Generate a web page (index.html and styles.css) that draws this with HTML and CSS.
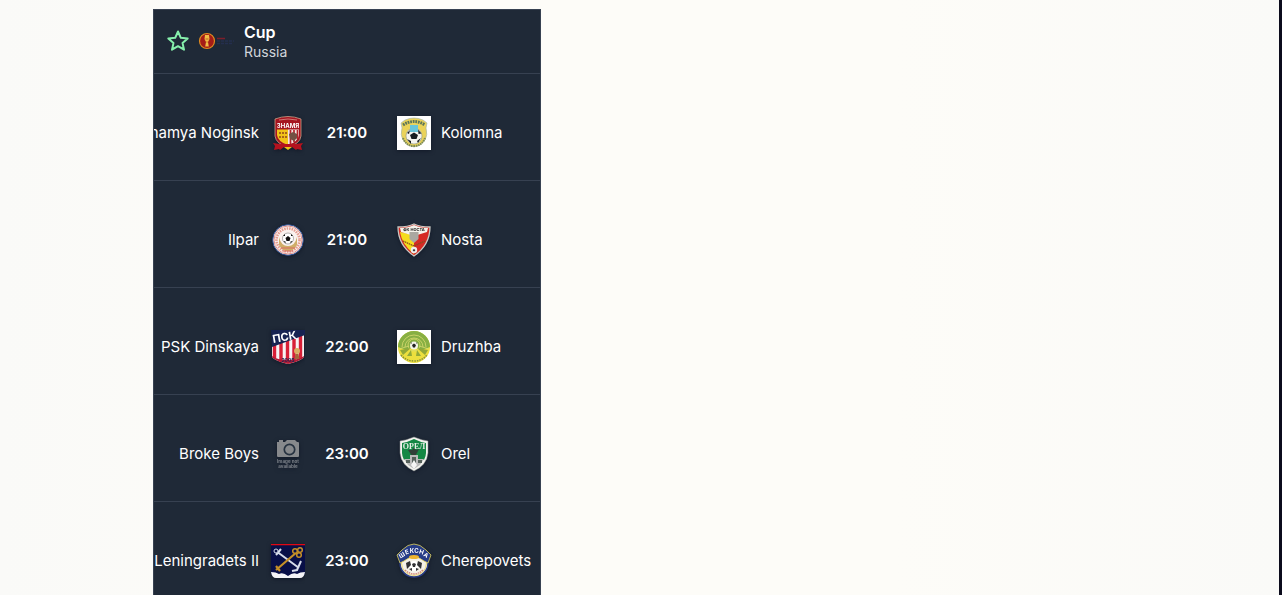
FILE: index.html
```html
<!DOCTYPE html>
<html lang="en">
<head>
<meta charset="utf-8">
<meta name="viewport" content="width=device-width, initial-scale=1">
<title>Cup – Russia</title>
<link rel="stylesheet" href="styles.css">
</head>
<body>
<main class="page">
<section class="card">
  <header class="league">
    <button class="star" type="button" aria-label="Add to favourites">
      <svg viewBox="0 0 24 24" width="24" height="24"><path d="M12 1.500l2.800 6.300 6.900.6-5.200 4.500 1.500 6.800-6-3.500-6 3.500 1.500-6.800-5.200-4.500 6.900-.6z"/></svg>
    </button>
    <svg class="league-logo" viewBox="0 0 36 36" width="36" height="36" aria-hidden="true">
      <circle cx="9" cy="17" r="7.500" fill="#a51c17" stroke="#df8b20" stroke-width="1.200"/>
      <path d="M7 11h4l.5 4-1.500 3 .8 4.500H7.200L8 18l-1.500-3z" fill="#f2bd45"/>
      <path d="M7.500 15h3M8.300 18h1.400" stroke="#b84c16" stroke-width=".8"/>
      <path d="M19 14.500h8" stroke="#7c1f2b" stroke-width="1.500"/>
      <path d="M19 17h17M19 19.500h15" stroke="#242f4e" stroke-width="1.500" stroke-dasharray="3 1"/>
    </svg>
    <div class="titles">
      <h1 class="name">Cup</h1>
      <p class="country">Russia</p>
    </div>
  </header>
  <ul class="matches">
    <li class="match">
      <div class="team home"><span>Znamya Noginsk</span>
        <svg class="crest" viewBox="0 0 34 34" aria-hidden="true">
          <path d="M4 3Q17-2 30 3v17q-1 8-13 11Q5 28 4 20z" fill="#a51420" stroke="#c9a58c" stroke-width=".8"/>
          <path d="M6 13.500h11V29Q7 26 6 19z" fill="#f2c318"/>
          <path d="M17 13.500h11V19q-1 7-11 10z" fill="#f3e4df"/>
          <path d="M19.500 14v14M23 14v12M26.500 14v9" stroke="#b8222b" stroke-width="1.700"/>
          <path d="M8 17h8M8 21h8" stroke="#a8641a" stroke-width="2" stroke-dasharray="2 1"/>
          <path d="M18 18l4-2 4 2v4l-3 3-4-2z" fill="#735043"/>
          <path d="M8 4q9-2 18 0" stroke="#e0a59a" stroke-width=".7" fill="none"/>
          <text x="17" y="11.500" class="mark" font-size="6" fill="#fff">ЗНАМЯ</text>
          <path d="M2 27l7 1h16l7-1-2 3 1 4-5-1-1 1-4-3h-8l-4 3-1-1-5 1 1-4z" fill="#b5121e"/>
          <path d="M13 31h8l-4 3z" fill="#f2c318"/>
        </svg>
      </div>
      <time class="time">21:00</time>
      <div class="team away">
        <svg class="crest" viewBox="0 0 34 34" aria-hidden="true">
          <path d="M0 0h34v34H0z" fill="#fff"/>
          <path d="M4 7l4-3q9-4 18 0l4 3-1 5q2 7-1 12-11 14-22 0-3-5-1-12z" fill="#ead35a" stroke="#9baeb0" stroke-width=".6"/>
          <path d="M6 9q11-7 22 0" fill="none" stroke="#5c7559" stroke-width="3" stroke-dasharray="1.800 .8"/>
          <path d="M6 22q3 8 11 8t11-8" fill="none" stroke="#7d8a52" stroke-width="2" stroke-dasharray="1.500 .8"/>
          <circle cx="17" cy="20" r="8" fill="#f5f5ef" stroke="#79827a" stroke-width=".5"/>
          <path d="M13 9h8v7h-8z" fill="#68c5d9"/>
          <path d="M17 16.500l4 2.500-1.500 4h-5L13 19zM10 17l3-3-1 4zM21 13.500l3.500 4-3 .5zM10 23l4 2v3zM24 22l-4 3 1 2z" fill="#171d20"/>
        </svg>
        <span>Kolomna</span></div>
    </li>
    <li class="match">
      <div class="team home"><span>Ilpar</span>
        <svg class="crest" viewBox="0 0 34 34" aria-hidden="true">
          <circle cx="17" cy="17" r="15.300" fill="#faf2ef" stroke="#294d91" stroke-width="1"/>
          <circle cx="17" cy="17" r="14" fill="none" stroke="#d66a62" stroke-width=".7"/>
          <circle cx="17" cy="17" r="11.500" fill="none" stroke="#e59b8f" stroke-width="2.600" stroke-dasharray="1.500 1"/>
          <path d="M8 14q2 9 9 9t9-9v8q-3 6-9 6t-9-6z" fill="#cfae68"/>
          <path d="M10 25h14M12 28h10" stroke="#d96a60" stroke-width="1.200"/>
          <circle cx="17" cy="15.500" r="5.500" fill="#fff" stroke="#666" stroke-width=".5"/>
          <path d="M17 13l2.500 2-1 3h-3l-1-3zM12 13l2-2v2zM20 11l2 2h-2zM12.500 18l2 .5v2zM21.500 18l-2 .5v2z" fill="#111"/>
        </svg>
      </div>
      <time class="time">21:00</time>
      <div class="team away">
        <svg class="crest" viewBox="0 0 34 34" aria-hidden="true">
          <path d="M1 4Q11 4 17 1q6 3 16 3 0 18-16 29Q1 22 1 4z" fill="#d62a24" stroke="#c8c8c3" stroke-width="1.300"/>
          <path d="M3 9l14 3v19Q5 22 3 9z" fill="#f5dc1f"/>
          <path d="M3 5q8 0 14-3 6 3 14 3l-1 4-13 4L4 9z" fill="#f5f3eb"/>
          <text x="17" y="7.500" class="mark" font-size="4" fill="#222">ФК НОСТА</text>
          <path d="M12.500 9h9v7l-4.500 4-4.500-4z" fill="#aaa8a1"/>
          <path d="M6 18l11 5 11-5" stroke="#8a4a1e" stroke-width="1.300" stroke-dasharray="1.500 .6" fill="none"/>
          <circle cx="17" cy="27" r="3.200" fill="#eee"/><path d="M17 26l1.300 1-.6 1.300h-1.400l-.6-1.300z" fill="#333"/>
        </svg>
        <span>Nosta</span></div>
    </li>
    <li class="match">
      <div class="team home"><span>PSK Dinskaya</span>
        <svg class="crest" viewBox="0 0 34 34" aria-hidden="true">
          <path d="M1 0h32v26q0 4-16 8Q1 30 1 26z" fill="#f7f3f4"/>
          <path d="M3.500 15v13M10 12v20M16.500 10v23M23 7v25M29.500 5v24" stroke="#d81f37" stroke-width="3.400"/>
          <path d="M0 0h34v5L1 17z" fill="#172352"/>
          <text x="14" y="11" class="mark" font-size="11" transform="rotate(-10 13 10)" fill="#fff">ПСК</text>
          <path d="M1 26q0 4 16 8 16-4 16-8-5 4-16 4T1 26z" fill="#b21c37"/>
          <text x="17" y="32" class="mark" font-size="5" fill="#172352">2005</text>
          <circle cx="26" cy="21" r="3" fill="#d8ad62"/><path d="M24.500 24h3l1 5h-5z" fill="#a6663b"/>
        </svg>
      </div>
      <time class="time">22:00</time>
      <div class="team away">
        <svg class="crest" viewBox="0 0 34 34" aria-hidden="true">
          <path d="M0 0h34v34H0z" fill="#fff"/>
          <circle cx="17" cy="17" r="16" fill="#ecdf3e"/>
          <path d="M1 17a16 16 0 0132 0l-8 3-8-3-8 3z" fill="#87af43"/>
          <g fill="none" stroke="#d9db70" stroke-width=".8"><circle cx="17" cy="15" r="6"/><path d="M8 17a9 9 0 0118 0M5 17a12 12 0 0124 0M2 19l10-3M5 23l9-5M10 26l5-6M32 19l-10-3M29 23l-9-5M24 26l-5-6"/></g>
          <path d="M3 20l11-2-8 7zM31 20l-11-2 8 7zM14 20l-4 6h5zM20 20l4 6h-5z" fill="#91a838"/>
          <circle cx="17" cy="15.500" r="4" fill="#f5f5e9"/><path d="M17 13.500l2 1.500-1 2.500h-2L15 15zM13.500 13l1-1v2zM19.500 12l1 1-1 1z" fill="#222"/>
          <path d="M4 25q5 6 13 6t13-6" fill="none" stroke="#89903c" stroke-width="1.500" stroke-dasharray="1.500 1"/>
        </svg>
        <span>Druzhba</span></div>
    </li>
    <li class="match">
      <div class="team home"><span>Broke Boys</span>
        <svg class="crest" viewBox="0 0 34 34" aria-hidden="true">
          <path d="M6 5h2V3h4v2h2l2-2h8l2 2h1q1 0 1 1v13q0 1-1 1H7q-1 0-1-1z" fill="#87898c"/>
          <circle cx="18.500" cy="12.500" r="5.200" fill="#87898c" stroke="#263240" stroke-width="1.700"/>
          <text x="17" y="26" class="note" font-size="4.500" fill="#7b8088">Image not</text>
          <text x="17" y="31" class="note" font-size="4.500" fill="#7b8088">available</text>
        </svg>
      </div>
      <time class="time">23:00</time>
      <div class="team away">
        <svg class="crest" viewBox="0 0 34 34" aria-hidden="true">
          <path d="M3 4Q10 3 17 0q7 3 14 4v12q-1 12-14 18Q4 28 3 16z" fill="#f4f4ef" stroke="#888f8c" stroke-width=".5"/>
          <path d="M5 6q6-1 12-4 6 3 12 4v10q0 3-2 7l-10-1-10 1q-2-4-2-7z" fill="#148744"/>
          <text x="17" y="11.500" class="serif-mark" font-size="8" fill="#e7eee5">ОРЕЛ</text>
          <path d="M15 13l2-2 2 2 3-1-2 4-3 5-4-5-2-3z" fill="#303f38"/>
          <path d="M7 22h6v-4h8v4h6l-4 6-6 4-6-4z" fill="#bbb"/>
          <path d="M9 23h4v3H9zM15 20h4v6h-4zM21 23h4v3h-4z" fill="#55615b"/>
          <path d="M17 23l3 5-3 4-3-4z" fill="#f5f5f5"/>
        </svg>
        <span>Orel</span></div>
    </li>
    <li class="match">
      <div class="team home"><span>Leningradets II</span>
        <svg class="crest" viewBox="0 0 34 34" aria-hidden="true">
          <path d="M0 0h34v30q-2 3-5 2l-6 1-6 1-6-1-6-1q-3 1-5-2z" fill="#080f47"/>
          <path d="M0 0h34v1.300H0z" fill="#e10813"/>
          <path d="M5 7l23 17M5 11l5-6M21 27l5-1 4-9" fill="none" stroke="#d6dce9" stroke-width="2"/>
          <circle cx="5" cy="7" r="2" fill="#080f47" stroke="#d6dce9"/>
          <path d="M5 26L26 8M5 22l4 5" fill="none" stroke="#c48f28" stroke-width="2.200"/>
          <g fill="#080f47" stroke="#c48f28" stroke-width="1.500"><circle cx="24" cy="7" r="2.300"/><circle cx="29" cy="6" r="2.300"/><circle cx="28" cy="11" r="2.300"/></g>
          <path d="M0 28q5 0 8 2 4-2 9 2 5-4 9-2 3-2 8-2-1 6-5 6H5q-4 0-5-6z" fill="#f4f4f7"/>
        </svg>
      </div>
      <time class="time">23:00</time>
      <div class="team away">
        <svg class="crest" viewBox="0 0 34 34" aria-hidden="true">
          <circle cx="17" cy="19" r="14" fill="#f4f1e8" stroke="#293c82" stroke-width="1.500"/>
          <circle cx="17" cy="19" r="12.500" fill="none" stroke="#e0c846" stroke-width=".7"/>
          <path d="M0 11l5-5q12-12 24 0l5 5-3 8-4-2q-10-8-20 0l-4 2z" fill="#263c87" stroke="#e4d65b" stroke-width=".8"/>
          <g class="mark" font-size="6" fill="#fff"><text x="6" y="13" transform="rotate(-32 6 13)">Ш</text><text x="10.500" y="10" transform="rotate(-18 10.500 10)">Е</text><text x="15" y="8.500">К</text><text x="19.500" y="8.500">С</text><text x="24" y="10" transform="rotate(18 24 10)">Н</text><text x="28" y="13" transform="rotate(32 28 13)">А</text></g>
          <ellipse cx="17" cy="13" rx="5" ry="2" fill="#eeb42f"/>
          <circle cx="17" cy="22" r="5" fill="#fff"/>
          <path d="M9 19l4-2 1 4-4 4zM25 19l-4-2-1 4 4 4zM15 20l2-1 2 1-1 3h-2zM12 25l3-1v3zM22 25l-3-1v3z" fill="#303033"/>
          <path d="M8 26q9 8 18 0" fill="none" stroke="#d27f72" stroke-width="1.300" stroke-dasharray="1.500 .8"/>
        </svg>
        <span>Cherepovets</span></div>
    </li>
  </ul>
</section>
</main>
</body>
</html>
```
FILE: styles.css
```css
* {
  box-sizing: border-box;
}

body {
  margin: 0;
  height: 100vh;
  overflow: hidden;
  font-family: Inter, "Liberation Sans", sans-serif;
  font-size: 15px;
  line-height: 20px;
  color: #fff;
}

.page {
  min-height: 100vh;
  padding: 9px 0 0 153px;
  background: linear-gradient(90deg, #fafaf8, #fdfcf8 30%, #fdfcf8 70%, #fafaf8);
  border-right: 3px solid #0b0b1c;
}

.card {
  width: 100%;
  max-width: 388px;
  background: #1f2937;
  border: 1px solid #374151;
}

.league {
  display: flex;
  align-items: center;
  padding: 12px;
  border-bottom: 1px solid #374151;
}

.star {
  display: flex;
  margin: 0 8px 0 0;
  padding: 0;
  border: 0;
  background: none;
  cursor: pointer;
}

.star path {
  fill: none;
  stroke: #86efac;
  stroke-width: 2;
  stroke-linejoin: round;
}

.league-logo {
  margin-right: 10px;
}

.titles {
  display: flex;
  flex-direction: column;
}

.name,
.country {
  margin: 0;
}

.name {
  font-size: 16px;
  font-weight: 600;
  line-height: 20px;
}

.country {
  font-size: 14px;
  line-height: 19px;
  color: #d1d5db;
}

.matches {
  margin: 0;
  padding: 0;
  list-style: none;
}

.match {
  display: grid;
  grid-template-columns: minmax(0, 1fr) 84px minmax(0, 1fr);
  align-items: center;
  padding: 42px 0 30px;
  border-bottom: 1px solid #374151;
}

.team {
  display: flex;
  align-items: center;
  white-space: nowrap;
}

.home {
  justify-content: flex-end;
  gap: 12px;
}

.away {
  gap: 10px;
  padding-left: 8px;
}

.home {
  overflow-x: clip;
}

.crest {
  flex: none;
  width: 34px;
  height: 34px;
  overflow: visible;
  filter: drop-shadow(0 1px 2px #111827);
}

.time {
  text-align: center;
  font-size: 15px;
  font-weight: 600;
}

.mark,
.note,
.serif-mark {
  text-anchor: middle;
  font-weight: 700;
}

.serif-mark {
  font-family: "Liberation Serif", serif;
}
```
